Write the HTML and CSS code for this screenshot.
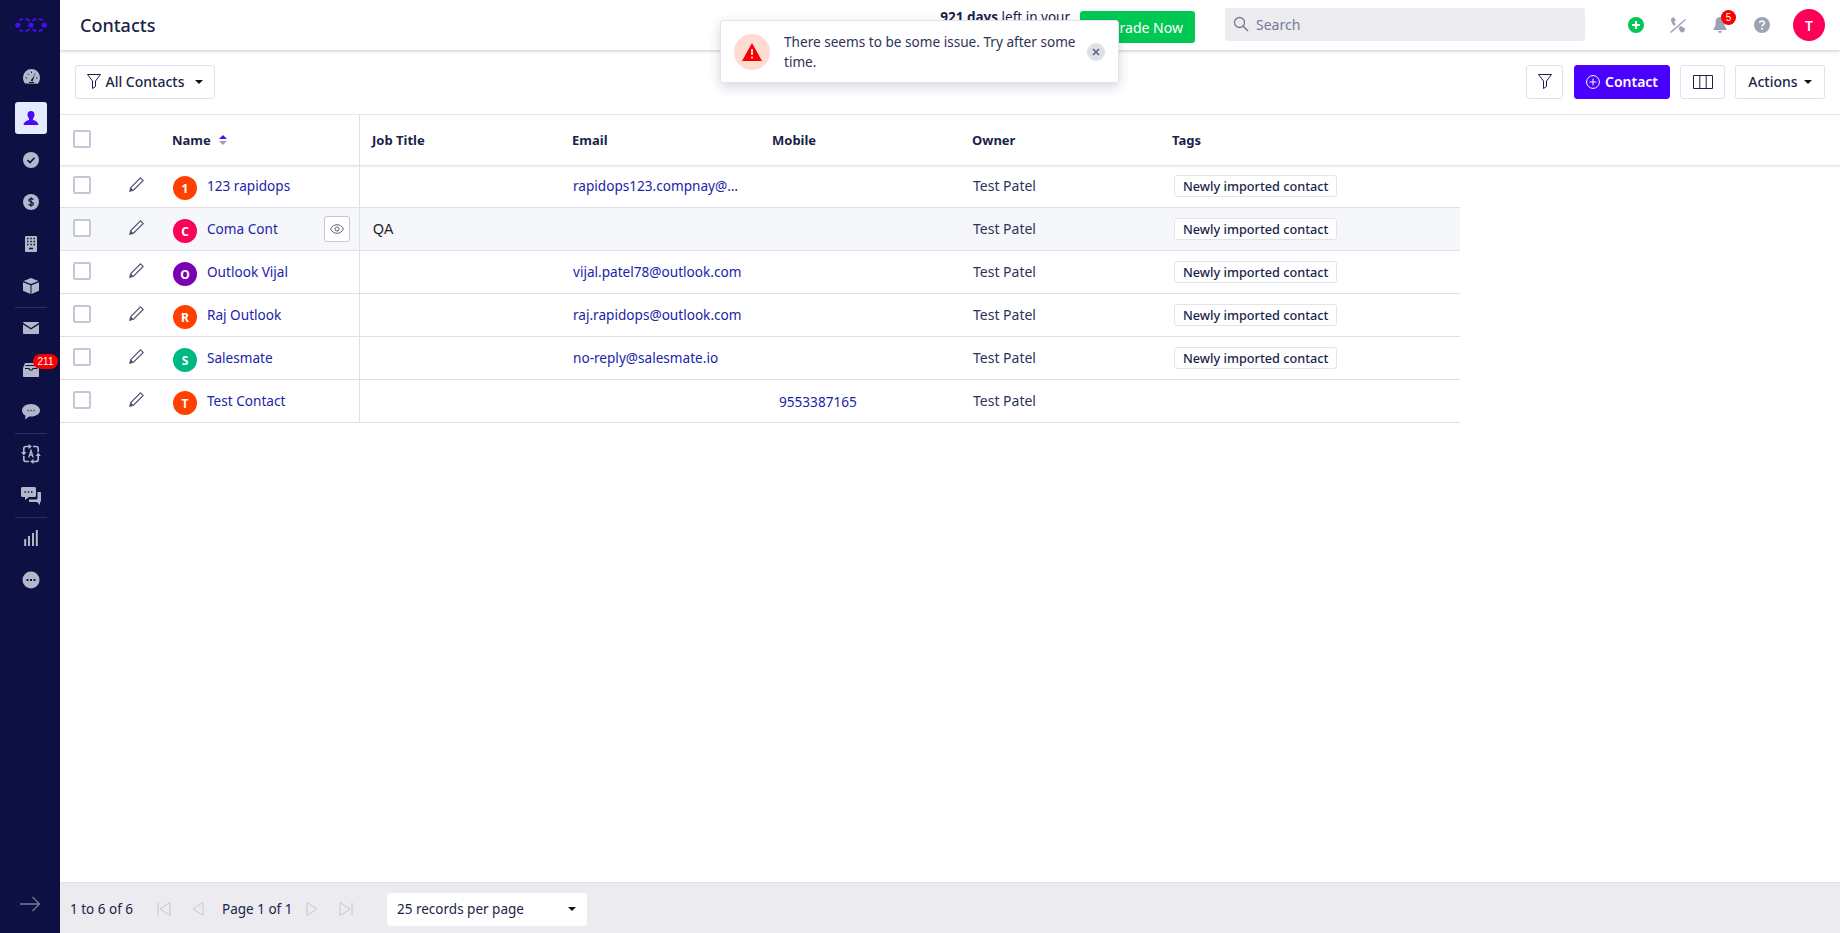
FILE: index.html
```html
<!DOCTYPE html>
<html lang="en">
<head>
    <meta charset="UTF-8">
    <meta name="viewport" content="width=device-width, initial-scale=1.0">
    <title>Contacts</title>
    <link rel="stylesheet" href="styles.css">
</head>
<body>
    <nav class="sidebar">
        <svg class="logo" width="32" height="14" viewBox="0 0 32 14"><g fill="#4a0cf5"><circle cx="2.700" cy="7" r="2.600"/><circle cx="16" cy="7" r="2.600"/><circle cx="29.300" cy="7" r="2.600"/></g><path d="M4.500 2.500C5.500 1.200 7 1 8 1M10.500 1c2 0 3 1 4 2M17.500 3c1-1 2-2 4-2M24 1c1 0 2.500.2 3.500 1.500M4.500 11.500C5.500 12.800 7 13 8 13M10.500 13c2 0 3-1 4-2M17.500 11c1 1 2 2 4 2M24 13c1 0 2.500-.2 3.500-1.500" fill="none" stroke="#4a0cf5" stroke-width="1.800"/></svg>
        <a class="nav-item"><svg width="17" height="15" viewBox="0 0 17 15"><path d="M8.500 0A8.500 8.500 0 0 0 0 8.500c0 2.300.7 4.500 2 6.100l13 .1c1.300-1.700 2-3.900 2-6.200A8.500 8.500 0 0 0 8.500 0z" fill="#b3b7c9"/><path d="M7.600 11.500 11.800 6 9.600 12.500z" fill="#0d1042"/><path d="M2.500 9h1.400M13.200 9h1.400M4.700 4.700l1 1M8.500 2.500v1.500M12.300 4.700l-1 1M6 13.500h5" stroke="#0d1042" stroke-width="1"/></svg></a>
        <a class="nav-item active"><svg width="16" height="16" viewBox="0 0 16 16"><path d="M8 1c-2.300 0-3.500 1.700-3.500 3.800 0 1.500.6 2.800 1.500 3.700v1.400C3.800 10.600.8 11.500.5 15h15c-.3-3.500-3.300-4.400-5.500-5.100V8.500c.9-.9 1.500-2.200 1.500-3.700C11.500 2.700 10.300 1 8 1z" fill="#4a0cf5"/></svg></a>
        <a class="nav-item"><svg width="16" height="16" viewBox="0 0 16 16"><circle cx="8" cy="8" r="8" fill="#b3b7c9"/><path d="M4.500 8.200 7 10.500l4.500-4.800" fill="none" stroke="#0d1042" stroke-width="1.600"/></svg></a>
        <a class="nav-item"><svg width="16" height="16" viewBox="0 0 16 16"><circle cx="8" cy="8" r="8" fill="#b3b7c9"/><path d="M10.300 5.800C10 5 9.200 4.700 8 4.700c-1.300 0-2.200.6-2.200 1.600 0 2.300 4.500 1 4.500 3.400 0 1-1 1.600-2.300 1.600-1.200 0-2.100-.4-2.400-1.300M8 3.300v9.400" fill="none" stroke="#0d1042" stroke-width="1.200"/></svg></a>
        <a class="nav-item"><svg width="14" height="16" viewBox="0 0 14 16"><rect x="1" y="0" width="12" height="16" rx="1" fill="#b3b7c9"/><path d="M3 2.500h1.500M6.300 2.500h1.500M9.500 2.500H11M3 5.500h1.500M6.300 5.500h1.500M9.500 5.500H11M3 8.500h1.500M6.300 8.500h1.500M9.500 8.500H11M5 12.500h4" stroke="#0d1042" stroke-width="1.300"/></svg></a>
        <a class="nav-item"><svg width="16" height="16" viewBox="0 0 16 16"><path d="M8 0 .5 3 8 6l7.500-3zM0 4.200l7.500 3V16L0 12.800zM16 4.200l-7.500 3V16l7.500-3.200z" fill="#b3b7c9"/></svg></a>
        <div class="nav-sep"></div>
        <a class="nav-item"><svg width="16" height="12" viewBox="0 0 16 12"><path d="M1 0h14c.5 0 1 .3 1 .8L8 6 0 .8C0 .3.500 0 1 0zM0 2.400 8 7.500l8-5.100V11c0 .6-.4 1-1 1H1c-.6 0-1-.4-1-1z" fill="#b3b7c9"/></svg></a>
        <a class="nav-item"><svg width="16" height="14" viewBox="0 0 16 14"><path d="M2 0h12l2 5v8c0 .6-.4 1-1 1H1c-.6 0-1-.4-1-1V5z" fill="#b3b7c9"/><path d="M2.500 2.500h11M2 5.500h4l1 1.500h2l1-1.500h4" fill="none" stroke="#0d1042" stroke-width="1.200"/></svg><span class="nav-badge">211</span></a>
        <a class="nav-item"><svg width="18" height="16" viewBox="0 0 18 16"><path d="M9 0C4 0 0 2.800 0 6.500c0 2.200 1.400 4 3.500 5.200L3 15.500l4-3c.6.100 1.300.1 2 .1 5 0 9-2.800 9-6.100S14 0 9 0z" fill="#b3b7c9"/><path d="M5.500 6.500h1M8.500 6.500h1M11.500 6.500h1" stroke="#0d1042" stroke-width="1.500"/></svg></a>
        <div class="nav-sep"></div>
        <a class="nav-item"><svg width="20" height="20" viewBox="0 0 20 20"><path d="M8 2.500H5C3.700 2.500 2.800 3.500 2.800 4.800V8M12 17.500h3c1.300 0 2.200-1 2.200-2.300V12M12 2.500h3c1.300 0 2.200 1 2.200 2.300V8M8 17.500H5c-1.300 0-2.200-1-2.200-2.300V12" fill="none" stroke="#b3b7c9" stroke-width="1.700"/><path d="M7.500 0v5L11 2.500zM12.500 15v5L9 17.500zM.2 8h5.200L2.800 11.500zM14.600 12h5.200L17.200 8.500z" fill="#b3b7c9"/><path d="M7.800 13.500 10 6.500l2.200 7M8.600 11h2.800" fill="none" stroke="#b3b7c9" stroke-width="1.300"/></svg></a>
        <a class="nav-item"><svg width="20" height="18" viewBox="0 0 20 18"><path d="M1.500 0h12c.8 0 1.500.7 1.500 1.500v7c0 .8-.7 1.500-1.500 1.500H8l-4 3v-3H1.500C.7 10 0 9.300 0 8.500v-7C0 .7.700 0 1.500 0z" fill="#b3b7c9"/><path d="M16.500 5H19c.6 0 1 .4 1 1v8c0 .6-.4 1-1 1v3l-3-3H9c-.6 0-1-.4-1-1v-1.500h7c.8 0 1.500-.7 1.500-1.500z" fill="#b3b7c9"/><path d="M3.500 5h1.500M6.800 5h1.500M10 5h1.500" stroke="#0d1042" stroke-width="1.600"/></svg></a>
        <div class="nav-sep"></div>
        <a class="nav-item"><svg width="14" height="16" viewBox="0 0 14 16"><path d="M1.200 9v7M5 6v10M9 3v13M12.800 0v16" stroke="#b3b7c9" stroke-width="2"/></svg></a>
        <a class="nav-item"><svg width="18" height="18" viewBox="0 0 18 18"><circle cx="9" cy="9" r="8.500" fill="#b3b7c9"/><path d="M4.500 9h2M8 9h2M11.500 9h2" stroke="#0d1042" stroke-width="2"/></svg></a>
        <svg class="nav-expand" width="22" height="16" viewBox="0 0 22 16"><path d="M1 8h19M13.500 1l7 7-7 7" fill="none" stroke="#767a96" stroke-width="1.300"/></svg>
    </nav>

    <div class="main">
        <header class="topbar">
            <h1>Contacts</h1>
            <div class="trial"><b>921 days</b> left in your</div>
            <button class="upgrade">Upgrade Now</button>
            <div class="search">
                <svg width="16" height="16" viewBox="0 0 16 16"><circle cx="6.500" cy="6.500" r="5" fill="none" stroke="#767a96" stroke-width="1.300"/><path d="M10.200 10.200 15 15" stroke="#767a96" stroke-width="1.500"/></svg>
                <span>Search</span>
            </div>
            <div class="top-icons">
                <svg width="16" height="16" viewBox="0 0 16 16"><circle cx="8" cy="8" r="8" fill="#00c853"/><path d="M8 4v8M4 8h8" stroke="#fff" stroke-width="2.200"/></svg>
                <svg width="16" height="16" viewBox="0 0 16 16"><path d="M1 2 3.800 0l2 3.500-1.500 1.300c.3.900.9 1.800 1.600 2.400L4.300 9C2.300 7.200.8 4.500 1 2zM8.800 10.400l1.700-1.500 4.500 2.400-.4 2.700c-.5 1-1.500 1.500-2.600 1.400-1.800-.3-3-2.500-3.200-5z" fill="#9ea2b5"/><path d="M.5 15.500 15.500 2.500" stroke="#9ea2b5" stroke-width="1.500"/></svg>
                <span class="bell"><svg width="16" height="16" viewBox="0 0 16 16"><path d="M8 0C5.500 0 3.500 2 3.500 5v3.500L1.500 12v1h13v-1l-2-3.500V5C12.500 2 10.500 0 8 0zM6 14a2 2 0 0 0 4 0z" fill="#9ea2b5"/></svg><i class="bell-count">5</i></span>
                <svg width="16" height="16" viewBox="0 0 16 16"><circle cx="8" cy="8" r="8" fill="#9ea2b5"/><path d="M5.700 6c0-1.300 1-2.100 2.300-2.100s2.300.8 2.300 2c0 1.700-2.300 1.600-2.300 3.500" fill="none" stroke="#fff" stroke-width="1.500"/><circle cx="8" cy="11.800" r="1" fill="#fff"/></svg>
                <span class="user">T</span>
            </div>
        </header>

        <div class="toast">
            <span class="toast-icon"><svg width="20" height="18" viewBox="0 0 20 18"><path d="M10 0 20 18H0z" fill="#f90000"/><path d="M10 6v6" stroke="#fff" stroke-width="1.600"/><circle cx="10" cy="14.500" r="1" fill="#fff"/></svg></span>
            <p>There seems to be some issue. Try after some time.</p>
            <span class="toast-close"><svg width="8" height="8" viewBox="0 0 8 8"><path d="M1 1l6 6M7 1 1 7" stroke="#5d6280" stroke-width="1.600"/></svg></span>
        </div>

        <div class="toolbar">
            <button class="btn view-btn">
                <svg width="14" height="15" viewBox="0 0 14 15"><path d="M.5.500h13L8.500 7v5.500L5.500 14.500V7z" fill="none" stroke="#1b1f4b"/></svg>
                All Contacts <i class="caret"></i>
            </button>
            <div class="spacer"></div>
            <button class="btn icon-btn filter-btn"><svg width="14" height="15" viewBox="0 0 14 15"><path d="M.5.500h13L8.500 7v5.500L5.500 14.500V7z" fill="none" stroke="#1b1f4b"/></svg></button>
            <button class="btn add-btn">
                <svg width="14" height="14" viewBox="0 0 14 14"><circle cx="7" cy="7" r="6.400" fill="none" stroke="#fff"/><path d="M7 3.500v7M3.500 7h7" stroke="#fff"/></svg>
                Contact
            </button>
            <button class="btn icon-btn cols-btn"><svg width="20" height="14" viewBox="0 0 20 14"><path d="M.5.500h19v13H.5zM6.800.500v13M13.200.500v13" fill="none" stroke="#1b1f4b"/></svg></button>
            <button class="btn actions-btn">Actions <i class="caret"></i></button>
        </div>

        <div class="table-head row">
            <div class="cell"><span class="check"></span></div>
            <div class="cell"></div>
            <div class="cell name-col">Name
                <svg class="sort" width="8" height="10" viewBox="0 0 8 10"><path d="M4 0 8 4H0z" fill="#4a0cf5"/><path d="M4 10 0 6h8z" fill="#9ea2b5"/></svg>
            </div>
            <div class="cell">Job Title</div>
            <div class="cell">Email</div>
            <div class="cell">Mobile</div>
            <div class="cell">Owner</div>
            <div class="cell">Tags</div>
        </div>

        <div class="row data-row">
            <div class="cell"><span class="check"></span></div>
            <div class="cell"><svg class="pencil" width="15" height="15" viewBox="0 0 15 15"><path d="M11.500.800 14.200 3.500 4.500 13.200.8 14.200 1.800 10.500z" fill="none" stroke="#4a4f6e" stroke-width="1.100"/><path d="M1.800 10.500 4.500 13.200.8 14.200z" fill="#4a4f6e"/></svg></div>
            <div class="cell name-col"><span class="avatar orange">1</span><a>123 rapidops</a></div>
            <div class="cell"></div>
            <div class="cell"><a class="email">rapidops123.compnay@…</a></div>
            <div class="cell"></div>
            <div class="cell owner">Test Patel</div>
            <div class="cell"><span class="tag">Newly imported contact</span></div>
        </div>
        <div class="row data-row hovered">
            <div class="cell"><span class="check"></span></div>
            <div class="cell"><svg class="pencil" width="15" height="15" viewBox="0 0 15 15"><path d="M11.500.800 14.200 3.500 4.500 13.200.8 14.200 1.800 10.500z" fill="none" stroke="#4a4f6e" stroke-width="1.100"/><path d="M1.800 10.500 4.500 13.200.8 14.200z" fill="#4a4f6e"/></svg></div>
            <div class="cell name-col"><span class="avatar pink">C</span><a>Coma Cont</a>
                <span class="eye"><svg width="14" height="10" viewBox="0 0 14 10"><path d="M.5 5C2 2 4.500.7 7 .7S12 2 13.500 5C12 8 9.500 9.300 7 9.300S2 8 .5 5z" fill="none" stroke="#5d6280"/><circle cx="7" cy="5" r="2" fill="none" stroke="#5d6280"/></svg></span>
            </div>
            <div class="cell job">QA</div>
            <div class="cell"></div>
            <div class="cell"></div>
            <div class="cell owner">Test Patel</div>
            <div class="cell"><span class="tag">Newly imported contact</span></div>
        </div>
        <div class="row data-row">
            <div class="cell"><span class="check"></span></div>
            <div class="cell"><svg class="pencil" width="15" height="15" viewBox="0 0 15 15"><path d="M11.500.800 14.200 3.500 4.500 13.200.8 14.200 1.800 10.500z" fill="none" stroke="#4a4f6e" stroke-width="1.100"/><path d="M1.800 10.500 4.500 13.200.8 14.200z" fill="#4a4f6e"/></svg></div>
            <div class="cell name-col"><span class="avatar purple">O</span><a>Outlook Vijal</a></div>
            <div class="cell"></div>
            <div class="cell"><a class="email">vijal.patel78@outlook.com</a></div>
            <div class="cell"></div>
            <div class="cell owner">Test Patel</div>
            <div class="cell"><span class="tag">Newly imported contact</span></div>
        </div>
        <div class="row data-row">
            <div class="cell"><span class="check"></span></div>
            <div class="cell"><svg class="pencil" width="15" height="15" viewBox="0 0 15 15"><path d="M11.500.800 14.200 3.500 4.500 13.200.8 14.200 1.800 10.500z" fill="none" stroke="#4a4f6e" stroke-width="1.100"/><path d="M1.800 10.500 4.500 13.200.8 14.200z" fill="#4a4f6e"/></svg></div>
            <div class="cell name-col"><span class="avatar orange">R</span><a>Raj Outlook</a></div>
            <div class="cell"></div>
            <div class="cell"><a class="email">raj.rapidops@outlook.com</a></div>
            <div class="cell"></div>
            <div class="cell owner">Test Patel</div>
            <div class="cell"><span class="tag">Newly imported contact</span></div>
        </div>
        <div class="row data-row">
            <div class="cell"><span class="check"></span></div>
            <div class="cell"><svg class="pencil" width="15" height="15" viewBox="0 0 15 15"><path d="M11.500.800 14.200 3.500 4.500 13.200.8 14.200 1.800 10.500z" fill="none" stroke="#4a4f6e" stroke-width="1.100"/><path d="M1.800 10.500 4.500 13.200.8 14.200z" fill="#4a4f6e"/></svg></div>
            <div class="cell name-col"><span class="avatar green">S</span><a>Salesmate</a></div>
            <div class="cell"></div>
            <div class="cell"><a class="email">no-reply@salesmate.io</a></div>
            <div class="cell"></div>
            <div class="cell owner">Test Patel</div>
            <div class="cell"><span class="tag">Newly imported contact</span></div>
        </div>
        <div class="row data-row">
            <div class="cell"><span class="check"></span></div>
            <div class="cell"><svg class="pencil" width="15" height="15" viewBox="0 0 15 15"><path d="M11.500.800 14.200 3.500 4.500 13.200.8 14.200 1.800 10.500z" fill="none" stroke="#4a4f6e" stroke-width="1.100"/><path d="M1.800 10.500 4.500 13.200.8 14.200z" fill="#4a4f6e"/></svg></div>
            <div class="cell name-col"><span class="avatar orange">T</span><a>Test Contact</a></div>
            <div class="cell"></div>
            <div class="cell"></div>
            <div class="cell"><a class="phone">9553387165</a></div>
            <div class="cell owner">Test Patel</div>
            <div class="cell"></div>
        </div>

        <footer class="pager">
            <span class="count">1 to 6 of 6</span>
            <svg class="pg-first" width="14" height="14" viewBox="0 0 14 14"><path d="M1 .5v13M13 .5v13L3 7z" fill="none" stroke="#c3c7d8"/></svg>
            <svg class="pg-prev" width="14" height="14" viewBox="0 0 14 14"><path d="M13 .5v13L3 7z" fill="none" stroke="#c3c7d8"/></svg>
            <span class="page-no">Page 1 of 1</span>
            <svg width="14" height="14" viewBox="0 0 14 14"><path d="M1 .5v13L11 7z" fill="none" stroke="#c3c7d8"/></svg>
            <svg class="pg-last" width="14" height="14" viewBox="0 0 14 14"><path d="M13 .5v13M1 .5v13L11 7z" fill="none" stroke="#c3c7d8"/></svg>
            <div class="per-page">25 records per page <i class="caret"></i></div>
        </footer>
    </div>
</body>
</html>
```
FILE: styles.css
```css
* {
    box-sizing: border-box;
}

body {
    font-family: "Noto Sans", Arial, sans-serif;
    font-size: 14px;
    color: #1b1f4b;
    background-color: #fff;
    margin: 0;
    height: 933px;
    display: flex;
    overflow: hidden;
}

button {
    font-family: inherit;
}

/* left nav */
.sidebar {
    width: 60px;
    flex-shrink: 0;
    background-color: #0d1042;
    display: flex;
    flex-direction: column;
    align-items: center;
    padding-top: 18px;
    padding-left: 2px;
}

.logo {
    margin-bottom: 28px;
}

.nav-item {
    position: relative;
    width: 32px;
    height: 32px;
    margin-bottom: 10px;
    display: flex;
    align-items: center;
    justify-content: center;
    border-radius: 3px;
}

.nav-item.active {
    background-color: #e4ebff;
}

.nav-sep {
    width: 32px;
    height: 1px;
    background-color: #2a2e5e;
    margin-top: -5px;
    margin-bottom: 4px;
}

.nav-badge {
    position: absolute;
    top: 0;
    left: 18px;
    width: 25px;
    background-color: #f90000;
    color: #fff;
    font-family: "Liberation Sans", sans-serif;
    font-size: 10px;
    line-height: 15px;
    text-align: center;
    border-radius: 8px;
}

.nav-expand {
    margin-top: auto;
    margin-bottom: 21px;
    margin-left: -2px;
}

.main {
    position: relative;
    flex: 1;
    display: flex;
    flex-direction: column;
    min-width: 0;
}

/* top bar */
.topbar {
    height: 50px;
    flex-shrink: 0;
    display: flex;
    align-items: center;
    padding-left: 20px;
    box-shadow: 0 1px 3px rgba(27, 31, 75, 0.25);
}

.topbar h1 {
    font-size: 18px;
    font-weight: 500;
    margin: 0;
    width: 790px;
}

.trial {
    width: 200px;
    text-align: right;
    font-size: 13.500px;
    margin-top: -17px;
}

.upgrade {
    width: 115px;
    height: 32px;
    margin-left: 10px;
    margin-top: 4px;
    background-color: #00c853;
    color: #fff;
    border: none;
    border-radius: 3px;
    font-size: 14px;
}

.search {
    width: 360px;
    height: 33px;
    margin-left: 30px;
    margin-top: -1px;
    padding-bottom: 1px;
    background-color: #ebebf0;
    border-radius: 3px;
    display: flex;
    align-items: center;
    gap: 7px;
    padding-left: 8px;
    color: #767a96;
}

.top-icons {
    margin-left: 43px;
    display: flex;
    align-items: center;
    gap: 26px;
}

.bell {
    position: relative;
    display: flex;
}

.bell-count {
    position: absolute;
    top: -7px;
    left: 9px;
    width: 15px;
    height: 15px;
    border-radius: 50%;
    background-color: #f90000;
    color: #fff;
    font-family: "Liberation Sans", sans-serif;
    font-style: normal;
    font-size: 10px;
    line-height: 15px;
    text-align: center;
}

.user {
    width: 32px;
    height: 32px;
    margin-left: -3px;
    border-radius: 50%;
    background-color: #ff0059;
    color: #fff;
    font-size: 14px;
    font-weight: 600;
    display: flex;
    align-items: center;
    justify-content: center;
}

/* error toast */
.toast {
    position: absolute;
    left: 660px;
    top: 20px;
    width: 399px;
    height: 63px;
    background-color: #fff;
    border: 1px solid #e2e3ec;
    border-radius: 3px;
    box-shadow: 0 4px 12px rgba(27, 31, 75, 0.18);
    display: flex;
    align-items: center;
    padding: 0 13px;
    z-index: 5;
}

.toast-icon {
    width: 36px;
    height: 36px;
    border-radius: 50%;
    background-color: #ffdcd3;
    display: flex;
    align-items: center;
    justify-content: center;
    flex-shrink: 0;
}

.toast p {
    margin: 0 2px 0 14px;
    font-size: 13.600px;
    line-height: 20px;
    color: #2e3358;
    flex: 1;
}

.toast-close {
    width: 18px;
    height: 18px;
    border-radius: 50%;
    background-color: #dfe0e7;
    display: flex;
    align-items: center;
    justify-content: center;
    flex-shrink: 0;
}

/* toolbar */
.toolbar {
    height: 65px;
    flex-shrink: 0;
    display: flex;
    align-items: center;
    padding: 0 15px 1px 15px;
    border-bottom: 1px solid #e8e9f0;
}

.spacer {
    flex: 1;
}

.btn {
    height: 34px;
    background-color: #fff;
    border: 1px solid #dfe0e9;
    border-radius: 3px;
    color: #1b1f4b;
    font-size: 14px;
    font-weight: 500;
    display: flex;
    align-items: center;
    justify-content: center;
    padding: 0;
}

.view-btn {
    width: 140px;
    gap: 4px;
}

.caret {
    display: inline-block;
    width: 0;
    height: 0;
    border-left: 4px solid transparent;
    border-right: 4px solid transparent;
    border-top: 4px solid #111;
    margin-left: 6px;
}

.icon-btn {
    width: 37px;
}

.add-btn {
    width: 96px;
    margin-left: 11px;
    gap: 5px;
    background-color: #4a00ff;
    border-color: #4a00ff;
    color: #fff;
    font-weight: 600;
}

.cols-btn {
    width: 45px;
    margin-left: 10px;
}

.actions-btn {
    width: 90px;
    margin-left: 10px;
}

/* table */
.row {
    display: grid;
    grid-template-columns: 52px 60px 188px 200px 200px 200px 200px 300px;
}

.cell {
    display: flex;
    align-items: center;
    padding-left: 12px;
    min-width: 0;
}

.cell:first-child {
    padding-left: 13px;
}

.cell:nth-child(2) {
    padding-left: 17px;
}

.table-head {
    height: 50px;
    flex-shrink: 0;
    font-size: 13px;
    font-weight: 700;
    box-shadow: 0 1px 2px rgba(27, 31, 75, 0.2);
}

.table-head .name-col {
    gap: 8px;
}

.data-row {
    width: 1400px;
    height: 43px;
    flex-shrink: 0;
    border-bottom: 1px solid #dfe0e7;
}

.data-row a {
    color: #1a24a8;
    font-size: 13.600px;
    margin-top: -2px;
}

.data-row a.phone {
    margin-top: 0;
}

.hovered {
    background-color: #f6f7fb;
}

.name-col {
    border-right: 1px solid #dfe0e7;
    position: relative;
    padding-left: 0;
}

.check {
    width: 18px;
    height: 18px;
    display: block;
    background-color: #fff;
    border: 2px solid #c3c7d8;
    border-radius: 2px;
    margin-top: -3px;
}

.pencil {
    margin-top: -3px;
}

.avatar {
    width: 24px;
    height: 24px;
    margin-left: 1px;
    margin-right: 10px;
    margin-top: 4px;
    border-radius: 50%;
    color: #fff;
    font-size: 12px;
    font-weight: 700;
    display: flex;
    align-items: center;
    justify-content: center;
    flex-shrink: 0;
}

.orange { background-color: #ff4000; }
.pink { background-color: #ff0059; }
.purple { background-color: #7a00b3; }
.green { background-color: #00b884; }

.eye {
    position: absolute;
    right: 9px;
    top: 8px;
    width: 26px;
    height: 26px;
    background-color: #fff;
    border: 1px solid #c3c7d8;
    border-radius: 3px;
    display: flex;
    align-items: center;
    justify-content: center;
}

.job {
    font-family: "Liberation Sans", sans-serif;
    color: #222;
    padding-left: 13px;
}

.email {
    padding-left: 1px;
    white-space: nowrap;
}

.phone {
    padding-left: 7px;
}

.owner {
    padding-left: 13px;
    margin-top: -2px;
    color: #2e3358;
}

.tag {
    margin-left: 2px;
    margin-top: -1px;
    font-size: 12.700px;
    font-weight: 500;
    line-height: 20px;
    padding: 0 8px;
    background-color: #fff;
    border: 1px solid #e2e3ec;
    border-radius: 3px;
}

/* bottom pager */
.pager {
    margin-top: auto;
    height: 51px;
    flex-shrink: 0;
    background-color: #ebebf0;
    border-top: 1px solid #dfe0e9;
    display: flex;
    align-items: center;
    padding-left: 10px;
    padding-top: 2px;
    font-size: 13.500px;
}

.count {
    width: 64px;
    white-space: nowrap;
}

.pg-first {
    margin-left: 23px;
}

.pg-prev {
    margin-left: 19px;
}

.page-no {
    width: 70px;
    white-space: nowrap;
    margin-left: 18px;
    margin-right: 14px;
}

.pg-last {
    margin-left: 19px;
}

.per-page {
    width: 200px;
    height: 33px;
    margin-left: 34px;
    background-color: #fff;
    border-radius: 3px;
    display: flex;
    align-items: center;
    justify-content: space-between;
    padding: 0 11px 0 10px;
}
```
